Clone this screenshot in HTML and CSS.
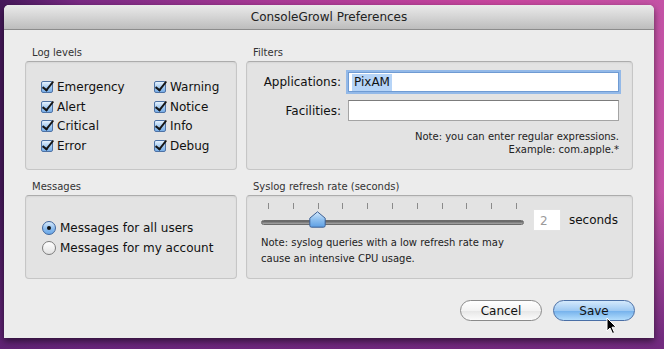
FILE: index.html
```html
<!DOCTYPE html>
<html lang="en">
<head>
  <meta charset="UTF-8">
  <title>ConsoleGrowl Preferences</title>
  <link rel="stylesheet" href="styles.css">
</head>
<body>
  <!-- Prefs window -->
  <div class="window">
    <div class="titlebar">ConsoleGrowl Preferences</div>

    <div class="content">
      <!-- Log levels -->
      <section class="group">
        <div class="group-label">Log levels</div>
        <div class="box levels">
          <label class="check"><span class="cb"></span>Emergency</label>
          <label class="check"><span class="cb"></span>Warning</label>
          <label class="check"><span class="cb"></span>Alert</label>
          <label class="check"><span class="cb"></span>Notice</label>
          <label class="check"><span class="cb"></span>Critical</label>
          <label class="check"><span class="cb"></span>Info</label>
          <label class="check"><span class="cb"></span>Error</label>
          <label class="check"><span class="cb"></span>Debug</label>
        </div>
      </section>

      <!-- Filters -->
      <section class="group">
        <div class="group-label">Filters</div>
        <div class="box filters">
          <div class="form">
            <span class="field-label">Applications:</span>
            <div class="input focused"><span class="selected">PixAM</span></div>
            <span class="field-label">Facilities:</span>
            <div class="input"></div>
          </div>
          <p class="note right">Note: you can enter regular expressions.<br>Example: com.apple.*</p>
        </div>
      </section>

      <!-- Messages -->
      <section class="group">
        <div class="group-label">Messages</div>
        <div class="box messages">
          <label class="radio-row"><span class="radio on"></span>Messages for all users</label>
          <label class="radio-row"><span class="radio"></span>Messages for my account</label>
        </div>
      </section>

      <!-- Syslog -->
      <section class="group">
        <div class="group-label">Syslog refresh rate (seconds)</div>
        <div class="box syslog">
          <div class="slider-row">
            <div class="slider">
              <div class="ticks">
                <i></i><i></i><i></i><i></i><i></i><i></i><i></i><i></i><i></i><i></i><i></i>
              </div>
              <div class="track"></div>
              <svg class="thumb" width="17" height="17" viewBox="0 0 17 17">
                <defs>
                  <linearGradient id="tg" x1="0" y1="0" x2="0" y2="1">
                    <stop offset="0" stop-color="#d6eafc"/>
                    <stop offset="0.5" stop-color="#8fc0ef"/>
                    <stop offset="1" stop-color="#5d9fe4"/>
                  </linearGradient>
                </defs>
                <path d="M8.5 0.8 L16.2 7.2 L16.2 14.5 Q16.2 16.2 14.5 16.2 L2.5 16.2 Q0.8 16.2 0.8 14.5 L0.8 7.2 Z" fill="url(#tg)" stroke="#3c5f93" stroke-width="1"/>
              </svg>
            </div>
            <div class="num">2</div>
            <span class="unit">seconds</span>
          </div>
          <p class="note">Note: syslog queries with a low refresh rate may<br>cause an intensive CPU usage.</p>
        </div>
      </section>
    </div>

    <div class="footer">
      <button class="btn">Cancel</button>
      <button class="btn primary">Save
        <svg class="cursor" width="12" height="18" viewBox="0 0 12 18">
          <path d="M1 1 L1 14 L4 11 L6.5 16.5 L8.5 15.6 L6 10.2 L10.2 10.2 Z" fill="#000" stroke="#fff" stroke-width="1"/>
        </svg>
      </button>
    </div>
  </div>
</body>
</html>
```

FILE: styles.css
```css
/* base */
* {
  margin: 0;
  padding: 0;
  box-sizing: border-box;
}

html, body {
  width: 664px;
  height: 349px;
  overflow: hidden;
}

body {
  font-family: "DejaVu Sans", sans-serif;
  font-size: 12px;
  color: #111;
  background:
    linear-gradient(to bottom, rgba(100, 36, 120, 0) 55%, rgba(100, 36, 120, 0.85) 97%),
    linear-gradient(90deg, #45185a 0%, #7a2a84 12%, #a93996 40%, #c9479f 75%, #c453a6 100%);
}

/* window */
.window {
  margin: 5px 0 0 4px;
  width: 650px;
  height: 333px;
  background: #ececec;
  border-radius: 5px 5px 0 0;
  box-shadow: 0 3px 7px rgba(0, 0, 0, 0.55);
}

.titlebar {
  height: 25px;
  line-height: 24px;
  text-align: center;
  color: #222;
  background: linear-gradient(#eaeaea, #d4d4d4 50%, #bdbdbd);
  border-bottom: 1px solid #8c8c8c;
  border-radius: 5px 5px 0 0;
}

.content {
  display: grid;
  grid-template-columns: 212px 387px;
  column-gap: 9px;
  row-gap: 9px;
  padding: 15px 21px 0;
}

.group-label {
  font-size: 10px;
  line-height: 16px;
  padding-left: 7px;
  color: #333;
}

.box {
  height: 109px;
  background: #e3e3e3;
  border: 1px solid #c6c6c6;
  border-top-color: #acacac;
  border-radius: 4px;
  box-shadow: inset 0 1px 2px rgba(0, 0, 0, 0.06);
}

/* log levels */
.levels {
  display: grid;
  grid-template-columns: 113px auto;
  grid-auto-rows: 19.7px;
  align-content: start;
  padding: 15px 0 0 15px;
}

.check {
  display: flex;
  align-items: center;
  gap: 4px;
}

.cb {
  position: relative;
  width: 12px;
  height: 12px;
  border: 1px solid #4d72a5;
  border-radius: 2px;
  background: linear-gradient(#e6f2fd, #a8cdf2 50%, #78ade6);
}

.cb::after {
  content: "";
  position: absolute;
  left: 3px;
  top: -3px;
  width: 4px;
  height: 10px;
  border: solid #161616;
  border-width: 0 2.5px 2.5px 0;
  transform: rotate(38deg);
}

/* filters */
.filters {
  padding: 10px 13px 0 0;
}

.form {
  display: grid;
  grid-template-columns: 1fr 271px;
  column-gap: 7px;
  row-gap: 8px;
  align-items: center;
}

.field-label {
  text-align: right;
}

.input {
  height: 20px;
  background: #fff;
  border: 1px solid #a4a4a4;
  border-top-color: #7c7c7c;
  padding: 2px 3px;
  line-height: 14px;
}

.input + .field-label + .input {
  height: 21px;
}

.input.focused {
  border-color: #6f9bd3;
  box-shadow: 0 0 0 2px #93b9e8;
}

.selected {
  background: #b6d4f7;
  padding: 1px 2px 2px;
}

.note {
  font-size: 10px;
  line-height: 13px;
  color: #222;
}

.note.right {
  margin-top: 9px;
  text-align: right;
}

/* messages */
.messages {
  height: 84px;
  padding: 22px 0 0 16px;
}

.radio-row {
  display: flex;
  align-items: center;
  gap: 4px;
  height: 20px;
}

.radio {
  position: relative;
  width: 14px;
  height: 14px;
  border-radius: 50%;
  border: 1px solid #7c7c7c;
  background: linear-gradient(#ffffff, #e2e2e2);
}

.radio.on {
  border-color: #3e659e;
  background: linear-gradient(#d7eafc, #8dbdee 55%, #6aa8e8);
}

.radio.on::after {
  content: "";
  position: absolute;
  left: 4px;
  top: 4px;
  width: 4px;
  height: 4px;
  border-radius: 50%;
  background: #111;
}

/* syslog */
.syslog {
  height: 84px;
  padding: 7px 14px 0;
}

.slider-row {
  display: flex;
  align-items: flex-start;
}

.slider {
  position: relative;
  width: 265px;
  height: 24px;
}

.ticks {
  display: flex;
  justify-content: space-between;
  padding: 0 7px;
  height: 6px;
}

.ticks i {
  width: 1px;
  height: 6px;
  background: #8a8a8a;
}

.track {
  margin-top: 11px;
  height: 5px;
  border-radius: 3px;
  background: linear-gradient(#5e5e5e, #8a8a8a 60%, #a8a8a8);
  border: 1px solid #6b6b6b;
}

.thumb {
  position: absolute;
  left: 48px;
  top: 8px;
}

.num {
  margin: 6px 0 0 9px;
  width: 28px;
  height: 22px;
  line-height: 22px;
  padding-left: 6px;
  background: #fff;
  border: 1px solid #e4e4e4;
  color: #9a9a9a;
}

.unit {
  margin: 6px 0 0 8px;
  line-height: 22px;
}

.syslog .note {
  margin-top: 4px;
  line-height: 16px;
}

/* buttons */
.footer {
  display: flex;
  justify-content: flex-end;
  gap: 11px;
  padding: 21px 19px 0 0;
}

.btn {
  position: relative;
  width: 82px;
  height: 21px;
  border-radius: 11px;
  font-family: "DejaVu Sans", sans-serif;
  font-size: 12px;
  color: #111;
  border: 1px solid #8a8a8a;
  background: linear-gradient(#ffffff, #f3f3f3 50%, #e6e6e6 52%, #fbfbfb);
}

.btn.primary {
  border-color: #4a6fa6;
  background: linear-gradient(#d4e9fc, #9fcaf3 50%, #74b1ec 52%, #b3ddfc);
}

.cursor {
  position: absolute;
  left: 52px;
  top: 16px;
}
```
